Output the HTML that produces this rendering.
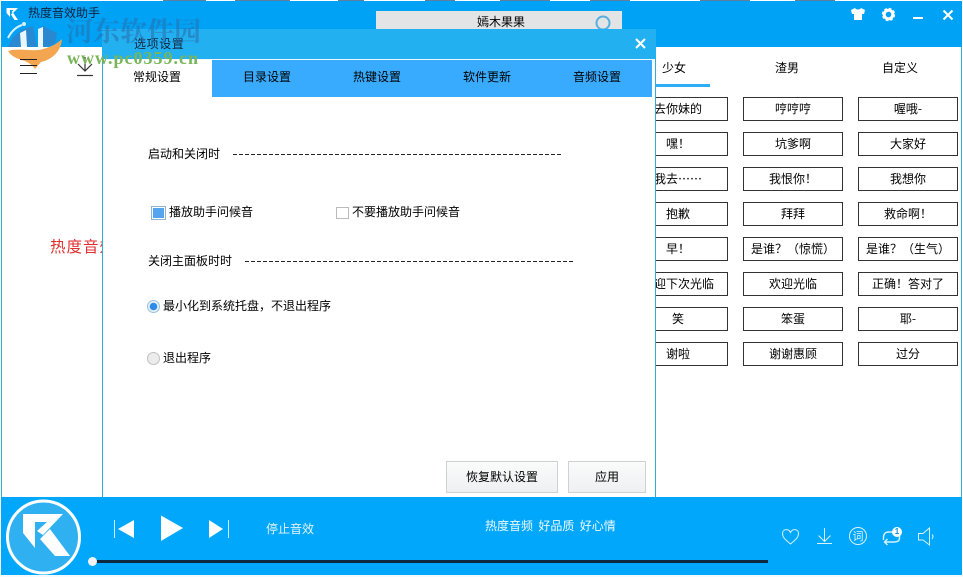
<!DOCTYPE html>
<html><head><meta charset="utf-8">
<style>
html,body{margin:0;padding:0;background:#fff}
#r{position:relative;width:963px;height:577px;overflow:hidden;background:#fff;font:12px/16px "WenQuanYi Zen Hei","Noto Sans CJK SC",sans-serif;color:#000}
#r div{position:absolute}
.t{white-space:nowrap}
.b{width:98px;height:22px;border:1px solid #333;background:#fff;text-align:center;line-height:22px;white-space:nowrap;overflow:hidden}
.tab{top:60px;height:37px;line-height:34px;width:110px;text-align:center}
.btn{border:1px solid #cfd2d2;background:linear-gradient(#fafbfb,#eef0f1);text-align:center;box-sizing:border-box;height:32px;line-height:30px;top:461px}
.dash{height:1px;background:repeating-linear-gradient(90deg,#222 0 4px,transparent 4px 6px)}
.s{top:0;height:1px;background:#5f7f9f}
</style></head><body>
<div id="r">
<!-- top strip -->
<div class="s" style="left:163px;width:43px"></div><div class="s" style="left:235px;width:55px"></div><div class="s" style="left:338px;width:26px"></div><div class="s" style="left:425px;width:30px"></div><div class="s" style="left:500px;width:50px"></div><div class="s" style="left:590px;width:40px"></div><div class="s" style="left:700px;width:50px"></div><div class="s" style="left:795px;width:40px"></div>
<!-- title bar -->
<div style="left:1px;top:1px;width:961px;height:46px;background:#00a2f6"></div>
<div style="left:1px;top:47px;width:1px;height:450px;background:#2ab8d8"></div>
<div style="left:961px;top:47px;width:1px;height:450px;background:#2ab8d8"></div>
<div class="t" style="left:28px;top:5px;color:#10213a">热度音效助手</div>
<svg style="position:absolute;left:5px;top:6px" width="15" height="15" viewBox="0 0 15 15"><path d="M1.500 2H13L8 7 6.500 6 8.500 4H5V11L1.500 7ZM6 8.500 8 6.500 13 14H9.500Z" fill="#fff"/></svg>
<!-- search box -->
<div style="left:376px;top:11px;width:246px;height:18px;background:#e3e4e6"></div>
<div class="t" style="left:477px;top:14px">嫣木果果</div>
<svg style="position:absolute;left:594px;top:14px" width="18" height="18"><circle cx="9" cy="9" r="6.500" fill="none" stroke="#55b0e0" stroke-width="2"/></svg>
<!-- top right icons -->
<svg style="position:absolute;left:850px;top:7px" width="16" height="14" viewBox="0 0 16 14"><path d="M5 1 1 3 2 7H4V13H12V7H14L15 3 11 1C10 3 6 3 5 1Z" fill="#fff"/></svg>
<svg style="position:absolute;left:881px;top:7px" width="15" height="15" viewBox="0 0 15 15"><circle cx="7.500" cy="7.500" r="4.300" fill="none" stroke="#fff" stroke-width="3"/><circle cx="7.500" cy="7.500" r="5.200" fill="none" stroke="#fff" stroke-width="3" stroke-dasharray="2.400 1.700"/></svg>
<div style="left:913px;top:17px;width:10px;height:2px;background:#fff"></div>
<svg style="position:absolute;left:942px;top:9px" width="12" height="12"><path d="M1.500 1.500 10.500 10.500M10.500 1.500 1.500 10.500" stroke="#fff" stroke-width="2"/></svg>
<!-- left icons -->
<svg style="position:absolute;left:75px;top:56px" width="20" height="21"><path d="M10 1V15M3 8 10 15 17 8" fill="none" stroke="#333" stroke-width="1.200"/><path d="M2 19.500H18" stroke="#333" stroke-width="1.200"/></svg>
<div class="t" style="left:50px;top:238px;width:52px;overflow:hidden;color:#e03030;font-size:15.500px;letter-spacing:1px">热度音效</div>
<!-- right tabs -->
<div class="t" style="left:662px;top:60px">少女</div>
<div class="t" style="left:775px;top:60px">渣男</div>
<div class="t" style="left:882px;top:60px">自定义</div>
<div style="left:656px;top:84px;width:54px;height:3px;background:#2eaef5"></div>
<!-- sound buttons -->
<div class="b" style="left:628px;top:97px">去你妹的</div><div class="b" style="left:743px;top:97px">哼哼哼</div><div class="b" style="left:858px;top:97px">喔哦-</div>
<div class="b" style="left:628px;top:132px">嘿&#xFF01;</div><div class="b" style="left:743px;top:132px">坑爹啊</div><div class="b" style="left:858px;top:132px">大家好</div>
<div class="b" style="left:628px;top:167px">我去……</div><div class="b" style="left:743px;top:167px">我恨你&#xFF01;</div><div class="b" style="left:858px;top:167px">我想你</div>
<div class="b" style="left:628px;top:202px">抱歉</div><div class="b" style="left:743px;top:202px">拜拜</div><div class="b" style="left:858px;top:202px">救命啊&#xFF01;</div>
<div class="b" style="left:628px;top:237px">早&#xFF01;</div><div class="b" style="left:743px;top:237px">是谁&#xFF1F;&#xFF08;惊慌&#xFF09;</div><div class="b" style="left:858px;top:237px">是谁&#xFF1F;&#xFF08;生气&#xFF09;</div>
<div class="b" style="left:628px;top:272px">欢迎下次光临</div><div class="b" style="left:743px;top:272px">欢迎光临</div><div class="b" style="left:858px;top:272px">正确&#xFF01;答对了</div>
<div class="b" style="left:628px;top:307px">笑</div><div class="b" style="left:743px;top:307px">笨蛋</div><div class="b" style="left:858px;top:307px">耶-</div>
<div class="b" style="left:628px;top:342px">谢啦</div><div class="b" style="left:743px;top:342px">谢谢惠顾</div><div class="b" style="left:858px;top:342px">过分</div>
<!-- dialog -->
<div style="left:102px;top:29px;width:552px;height:468px;background:#fff;border-left:1px solid #2ab0d0;border-right:1px solid #2ab0d0"></div>
<div style="left:102px;top:29px;width:554px;height:30px;background:#22b0f1"></div>
<div style="left:103px;top:59px;width:551px;height:1px;background:#eef8fe"></div>
<div class="t" style="left:134px;top:36px;color:#10263c;letter-spacing:.6px">选项设置</div>
<svg style="position:absolute;left:635px;top:38px" width="11" height="11"><path d="M1 1 10 10M10 1 1 10" stroke="#fff" stroke-width="2"/></svg>
<div style="left:212px;top:60px;width:440px;height:37px;background:#38abfe"></div>
<div class="t tab" style="left:102px">常规设置</div>
<div class="t tab" style="left:212px">目录设置</div>
<div class="t tab" style="left:322px">热键设置</div>
<div class="t tab" style="left:432px">软件更新</div>
<div class="t tab" style="left:542px">音频设置</div>
<div class="t" style="left:148px;top:146px">启动和关闭时</div>
<div class="dash" style="left:233px;top:154px;width:330px"></div>
<div style="left:151px;top:206px;width:13px;height:12px;border:1px solid #8fb4d0;background:#fff"></div>
<div style="left:153px;top:208px;width:11px;height:10px;background:#55a5ee"></div>
<div class="t" style="left:169px;top:204px">播放助手问候音</div>
<div style="left:336px;top:207px;width:11px;height:10px;border:1px solid #bbb;background:#fff"></div>
<div class="t" style="left:352px;top:204px">不要播放助手问候音</div>
<div class="t" style="left:148px;top:253px">关闭主面板时时</div>
<div class="dash" style="left:245px;top:261px;width:330px"></div>
<svg style="position:absolute;left:146px;top:299px" width="15" height="15"><circle cx="7.500" cy="7.500" r="6" fill="#e6f0f8" stroke="#9cc0dc"/><circle cx="7.500" cy="7.500" r="3.800" fill="#2f8be8"/></svg>
<div class="t" style="left:163px;top:298px">最小化到系统托盘&#xFF0C;不退出程序</div>
<svg style="position:absolute;left:146px;top:351px" width="15" height="15"><circle cx="7.500" cy="7.500" r="6" fill="#ececec" stroke="#c0c0c0"/></svg>
<div class="t" style="left:163px;top:350px">退出程序</div>
<div class="btn t" style="left:446px;width:112px">恢复默认设置</div>
<div class="btn t" style="left:568px;width:78px">应用</div>
<!-- watermark -->
<svg style="position:absolute;left:5px;top:18px" width="60" height="54" viewBox="0 0 60 54">
<path d="M3 29 8 19 18 11 28 8 32 29Z" fill="#2a88d0"/>
<path d="M3 20C6 14 11 9 17 7" fill="none" stroke="#d8effc" stroke-width="2"/>
<path d="M15 15 21 12 22 29 16 29Z" fill="#eaf6fd"/>
<circle cx="19" cy="6" r="2" fill="#d8effc"/>
<path d="M33 11 38 8 52 15 50 26 40 29 34 29Z" fill="#2a88d0"/>
<path d="M33 11 38 9 38 29 33 29Z" fill="#eaf6fd"/>
<path d="M3 33C12 30 24 33 34 32 44 30 52 26 57 21 56 34 46 42 36 44L30 51C26 46 24 45 20 43 12 41 6 38 3 33Z" fill="#f3a550"/>
</svg>
<div style="left:20px;top:59px;width:17px;height:1px;background:#222"></div>
<div style="left:20px;top:65px;width:17px;height:1px;background:#222"></div>
<div style="left:20px;top:73px;width:17px;height:1px;background:#222"></div>
<div class="t" style="left:66px;top:15px;font:bold 27px/30px 'Noto Serif CJK SC',serif;color:rgba(40,110,170,.55)">河东软件园</div>
<div class="t" style="left:67px;top:49px;font:bold 18px/18px 'Liberation Serif',serif;color:#7ab55a;letter-spacing:1px">www.pc0359.cn</div>
<!-- bottom -->
<div style="left:1px;top:497px;width:961px;height:78px;background:#00a7fa"></div>
<svg style="position:absolute;left:5px;top:498px" width="78" height="78" viewBox="0 0 78 78">
<circle cx="38.500" cy="39" r="36" fill="#2fb0f0" stroke="#fff" stroke-width="3"/>
<path d="M18 16H58L38 37 32 33 42 24H30V50L18 35ZM35 41 45 31 65 58H50Z" fill="#fff"/>
</svg>
<svg style="position:absolute;left:110px;top:512px" width="125" height="36" viewBox="0 0 125 36">
<path d="M4.500 8V26" stroke="#cfeeff"/><path d="M24 8V26L8 17Z" fill="#fff"/>
<path d="M51 3.500 73 16 51 29Z" fill="#fff"/>
<path d="M99 8V26L113 17Z" fill="#fff"/><path d="M118.500 8V26" stroke="#cfeeff"/>
</svg>
<div class="t" style="left:266px;top:521px;color:#e4f5ff">停止音效</div>
<div class="t" style="left:485px;top:518px;color:#eef9ff">热度音频&nbsp; 好品质&nbsp; 好心情</div>
<div style="left:93px;top:560px;width:675px;height:3px;background:#0e2a42"></div>
<div style="left:88px;top:557px;width:9px;height:9px;border-radius:50%;background:#f0f4f8"></div>
<svg style="position:absolute;left:780px;top:526px" width="155" height="22" viewBox="0 0 155 22" fill="none" stroke="#d8f2ff" stroke-width="1">
<path d="M10.500 18C4.500 13 2.500 11 2.500 7.500 2.500 3 8.500 2 10.500 6.500 12.500 2 18.500 3 18.500 7.500 18.500 11 16.500 13 10.500 18Z"/>
<path d="M44.500 2V15.500M38.500 9.500 44.500 15.500 50.500 9.500M37 17.500H52"/>
<circle cx="78" cy="10" r="8.500"/>
<path d="M103.500 14V11C103.500 8 105.500 6 108.500 6H114M119.500 9V12C119.500 15 117.500 16 114 16H105M107.500 13 104.500 16 107.500 19" stroke-width="1.400"/>
<path d="M138.500 7.500H143L149.500 2V19L143 14H138.500ZM152 8.500Q154 10.500 152 13"/>
</svg>
<div class="t" style="left:852px;top:528px;width:12px;height:16px;font-size:11px;line-height:16px;color:#e4f5ff;text-align:center">词</div>
<div style="left:892px;top:527px;width:10px;height:10px;border-radius:50%;background:#fff;color:#0a90e0;font:bold 8px/10px 'Liberation Sans',sans-serif;text-align:center">1</div>
<div style="left:0;top:575px;width:963px;height:2px;background:#f6f9fb"></div>
</div>
</body></html>
